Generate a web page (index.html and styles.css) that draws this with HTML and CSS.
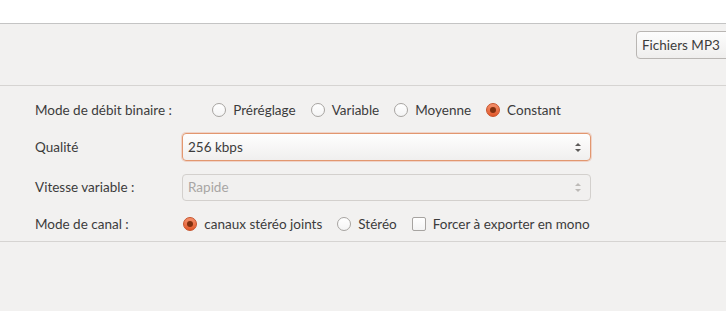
FILE: index.html
```html
<!doctype html>
<html lang="fr">
  <head>
    <meta charset="UTF-8" />
    <title>Export MP3</title>
    <link rel="stylesheet" href="styles.css">
  </head>
  <body>
    <div class="titlebar"></div>

    <div class="toolbar">
      <button class="format-btn">Fichiers MP3</button>
    </div>

    <div class="options">
      <div class="label">Mode de débit binaire :</div>
      <div class="choices">
        <label class="choice"><span class="radio"></span>Préréglage</label>
        <label class="choice"><span class="radio"></span>Variable</label>
        <label class="choice"><span class="radio"></span>Moyenne</label>
        <label class="choice"><span class="radio checked"></span>Constant</label>
      </div>

      <div class="label">Qualité</div>
      <div class="combo focused">
        <span>256 kbps</span>
        <span class="arrows"><i class="up"></i><i class="down"></i></span>
      </div>

      <div class="label">Vitesse variable :</div>
      <div class="combo disabled">
        <span>Rapide</span>
        <span class="arrows"><i class="up"></i><i class="down"></i></span>
      </div>

      <div class="label">Mode de canal :</div>
      <div class="choices">
        <label class="choice"><span class="radio checked"></span>canaux stéréo joints</label>
        <label class="choice"><span class="radio"></span>Stéréo</label>
        <label class="choice"><span class="check"></span>Forcer à exporter en mono</label>
      </div>
    </div>

    <div class="footer"></div>
  </body>
</html>
```

FILE: styles.css
```css
body {
  margin: 0;
  font-family: Lato, "Open Sans", sans-serif;
  font-size: 13.5px;
  color: #3c3c3c;
  background: #f2f1f0;
  overflow: hidden;
}

.titlebar {
  height: 23px;
  background: #fff;
  border-bottom: 1px solid #c4c4c4;
}

.toolbar {
  height: 62px;
  box-sizing: border-box;
  padding-top: 7px;
  border-bottom: 1px solid #d6d4d2;
  white-space: nowrap;
  overflow: hidden;
}

.format-btn {
  margin-left: 636px;
  height: 28px;
  width: 120px;
  padding: 0 5px;
  text-align: left;
  font: inherit;
  color: #3c3c3c;
  border: 1px solid #b9b6b3;
  border-radius: 4px;
  background: linear-gradient(#fdfdfd, #efeeed);
}

.options {
  display: grid;
  grid-template-columns: 147px 409px;
  grid-template-rows: 22px 28px 28px 22px;
  row-gap: 12px;
  align-items: center;
  padding: 13px 0 6px 35px;
  border-bottom: 1px solid #d6d4d2;
}

.label {
  white-space: nowrap;
}

.choices {
  display: flex;
  justify-content: center;
  gap: 15px;
}

.choice {
  display: flex;
  align-items: center;
  gap: 7px;
  white-space: nowrap;
}

.radio {
  width: 14px;
  height: 14px;
  box-sizing: border-box;
  border: 1px solid #a7a4a1;
  border-radius: 50%;
  background: linear-gradient(#fff, #f4f4f4);
  position: relative;
}

.radio.checked {
  border-color: #c6522a;
  background: linear-gradient(#f4906c, #e2582a);
}

.radio.checked::after {
  content: "";
  position: absolute;
  left: 3px;
  top: 3px;
  width: 6px;
  height: 6px;
  border-radius: 50%;
  background: #80300f;
}

.check {
  width: 14px;
  height: 14px;
  box-sizing: border-box;
  border: 1px solid #a7a4a1;
  border-radius: 2px;
  background: linear-gradient(#fff, #f4f4f4);
}

.combo {
  height: 28px;
  box-sizing: border-box;
  display: flex;
  align-items: center;
  justify-content: space-between;
  padding: 0 9px 0 5px;
  border: 1px solid #bdb9b5;
  border-radius: 4px;
  background: linear-gradient(#fefefe, #f0efee);
}

.combo.focused {
  border-color: #e2976f;
  box-shadow: 0 0 0 1px rgba(233, 125, 80, 0.25);
}

.combo.disabled {
  height: 27px;
  color: #a8a6a4;
  border-color: #d3d0cd;
  background: #f1f0ef;
}

.arrows {
  display: flex;
  flex-direction: column;
  gap: 3px;
}

.arrows i {
  width: 0;
  height: 0;
  border-left: 3px solid transparent;
  border-right: 3px solid transparent;
}

.arrows .up {
  border-bottom: 3px solid #5d5b59;
}

.arrows .down {
  border-top: 3px solid #5d5b59;
}

.disabled .arrows .up {
  border-bottom-color: #bdbab7;
}

.disabled .arrows .down {
  border-top-color: #bdbab7;
}
```
